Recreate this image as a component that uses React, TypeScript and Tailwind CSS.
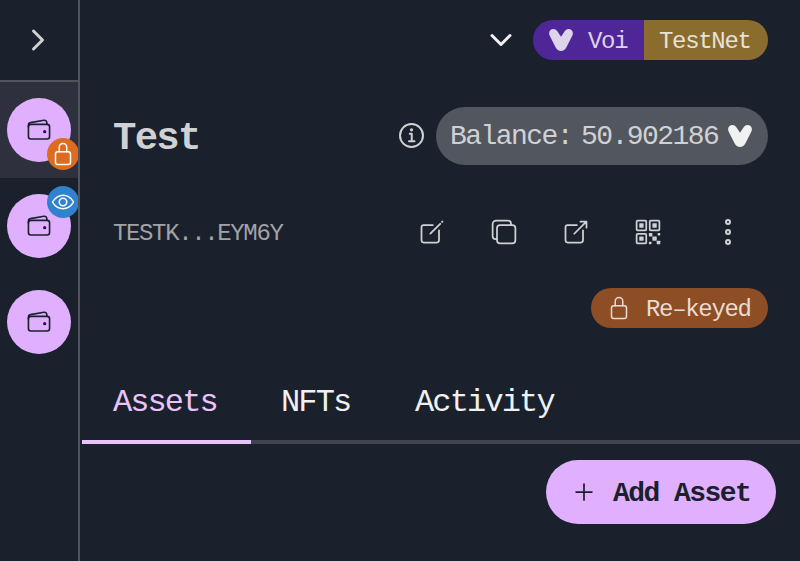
import React from 'react';
import {
  IoAdd,
  IoChevronDown,
  IoChevronForward,
  IoCopyOutline,
  IoCreateOutline,
  IoEllipsisVerticalOutline,
  IoEyeOutline,
  IoInformationCircleOutline,
  IoLockClosedOutline,
  IoOpenOutline,
  IoQrCodeOutline,
  IoWalletOutline,
} from 'react-icons/io5';

function VoiLogo({ className }: { className: string }) {
  return (
    <svg viewBox="0 0 24 24" className={className} fill="currentColor">
      <path d="M.6 7.400C-.9 4 1.200.9 4.400.9 6.300.9 7.800 2 8.700 3.700L12 8.700 15.300 3.700C16.200 2 17.700.9 19.600.9 22.800.9 24.900 4 23.400 7.400L17.300 19.600C16.100 22 14.400 23 12 23 9.600 23 7.900 22 6.700 19.600Z" />
    </svg>
  );
}

function Account({ badge, active = false }: { badge?: React.ReactNode; active?: boolean }) {
  return (
    <div className={`flex h-24 shrink-0 items-center pl-[7px] ${active ? 'bg-[#2e313d]' : ''}`}>
      <div className="relative flex size-16 items-center justify-center rounded-full bg-[#e0b0ff] text-[#1a202c]">
        <IoWalletOutline className="size-[26px]" />
        {badge}
      </div>
    </div>
  );
}

export default function App() {
  return (
    <div className="flex h-[561px] w-[800px] overflow-hidden bg-[#1a202c] font-['Liberation_Mono',monospace] text-[#d0d1d4]">
      <aside className="flex w-20 shrink-0 flex-col overflow-hidden border-r-2 border-[#51545d]">
        <button className="flex h-[82px] shrink-0 items-center justify-center border-b-2 border-[#51545d] pr-[2px] text-[#d0d1d4]">
          <IoChevronForward className="size-8" />
        </button>
        <Account
          active
          badge={
            <span className="absolute -right-2 -bottom-2 flex size-8 items-center justify-center rounded-full bg-[#dd6b20] text-white">
              <IoLockClosedOutline className="size-6" />
            </span>
          }
        />
        <Account
          badge={
            <span className="absolute -top-2 -right-2 flex size-8 items-center justify-center rounded-full bg-[#3182ce] text-white">
              <IoEyeOutline className="size-6" />
            </span>
          }
        />
        <Account />
      </aside>

      <main className="flex min-w-0 flex-1 flex-col">
        <header className="flex h-20 shrink-0 items-center justify-end pr-8">
          <IoChevronDown className="mr-4 size-8 text-[#f0f0f1]" />
          <div className="flex h-10 overflow-hidden rounded-full text-2xl tracking-[-0.055em]">
            <div className="flex w-[111px] items-center gap-[15px] bg-[#4e2698] pl-4 text-[#dcd4ea]">
              <VoiLogo className="size-6" />
              <span className="pt-[3px]">Voi</span>
            </div>
            <div className="flex w-[124px] items-center bg-[#8b6c2f] pt-[3px] pl-[15px] text-[#e7e2d6]">TestNet</div>
          </div>
        </header>

        <section className="mt-[27px] flex h-[58px] shrink-0 items-center pr-8 pl-[33px]">
          <h1 className="flex-1 pt-1.5 text-[39px] font-bold tracking-[-0.045em]">Test</h1>
          <IoInformationCircleOutline className="mr-2 size-8" />
          <div className="flex h-[58px] w-[332px] items-center rounded-full bg-[#52565e] pl-[14px] text-[28px] tracking-[-0.055em]">
            <span className="w-[131px] shrink-0 pt-[2px]">Balance:</span>
            <span className="w-[138px] shrink-0 pt-[2px]">50.902186</span>
            <VoiLogo className="ml-[9px] size-6 text-[#f0f2f2]" />
          </div>
        </section>

        <section className="mt-[43px] flex h-12 shrink-0 items-center pr-[56px] pl-[33px]">
          <span className="flex-1 pt-[3px] text-2xl tracking-[-0.057em] text-[#a1a3a7]">TESTK...EYM6Y</span>
          <div className="flex items-center gap-11">
            <IoCreateOutline className="size-7" />
            <IoCopyOutline className="size-7" />
            <IoOpenOutline className="size-7" />
            <IoQrCodeOutline className="size-7" />
            <IoEllipsisVerticalOutline className="ml-[6px] size-8" />
          </div>
        </section>

        <div className="mt-8 flex h-10 shrink-0 justify-end pr-8">
          <div className="flex w-[177px] items-center gap-[15px] rounded-full bg-[#8d4d25] pl-4 text-2xl tracking-[-0.055em] text-[#eadbd2]">
            <IoLockClosedOutline className="size-6" />
            <span className="pt-[3px]">Re–keyed</span>
          </div>
        </div>

        <nav className="mt-8 ml-[2px] flex h-[84px] shrink-0 border-b-4 border-[#41444e] text-[32px] text-[#f0f0f1]">
          <button className="-mb-1 flex w-[169px] items-center border-b-4 border-[#e8c4fa] pt-1.5 pl-[31px] tracking-[-0.06em] text-[#e8c4fa]">Assets</button>
          <button className="flex w-[133px] items-center pt-1.5 pl-[30px] tracking-[-0.058em]">NFTs</button>
          <button className="flex items-center px-[31px] pt-1.5 tracking-[-0.058em]">Activity</button>
        </nav>

        <div className="mt-4 flex justify-end pr-6">
          <button className="flex h-16 w-[230px] items-center rounded-full bg-[#e0b0ff] pl-6 text-[28px] font-bold text-[#1a202c]">
            <IoAdd className="mr-[15px] size-7" />
            <span className="pt-[3px] tracking-[-0.055em] whitespace-pre">Add Asset</span>
          </button>
        </div>
      </main>
    </div>
  );
}
